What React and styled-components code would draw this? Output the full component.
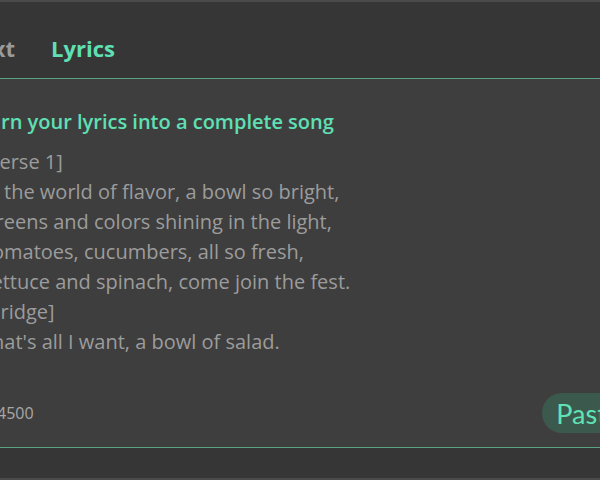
import styled, { createGlobalStyle } from "styled-components";

const GlobalStyle = createGlobalStyle`
    html, body {
        margin: 0;
        padding: 0;
        background-color: #363636;
        overflow: hidden;
    }
`;

const lyrics = [
    "[Verse 1]",
    "In the world of flavor, a bowl so bright,",
    "Greens and colors shining in the light,",
    "Tomatoes, cucumbers, all so fresh,",
    "Lettuce and spinach, come join the fest.",
    "[Bridge]",
    "That's all I want, a bowl of salad.",
];

function App() {
    return (
        <>
            <GlobalStyle />
            <S.Frame>
                <S.TabBar>
                    <S.Tab>Text</S.Tab>
                    <S.Tab $active>Lyrics</S.Tab>
                </S.TabBar>
                <S.Panel>
                    <S.Heading>Turn your lyrics into a complete song</S.Heading>
                    <S.Lyrics>
                        {lyrics.map((line) => (
                            <S.Line key={line}>{line}</S.Line>
                        ))}
                    </S.Lyrics>
                    <S.Footer>
                        <S.Count>0/4500</S.Count>
                        <S.PasteButton>Paste</S.PasteButton>
                    </S.Footer>
                </S.Panel>
                <S.BottomBar />
            </S.Frame>
        </>
    );
}
export default App;

const Frame = styled.div`
    width: 600px;
    height: 480px;
    box-sizing: border-box;
    border-top: 2px solid #4a4a4a;
    border-bottom: 2px solid #4a4a4a;
    display: flex;
    flex-direction: column;
    overflow: hidden;
    font-family: "Open Sans", "Noto Sans", sans-serif;
`;

const TabBar = styled.div`
    height: 77px;
    flex-shrink: 0;
    box-sizing: border-box;
    display: flex;
    align-items: center;
    gap: 36px;
    margin-left: -33px;
    padding-top: 15px;
    background-color: #363636;
    border-bottom: 1px solid #5aa383;
`;

const Tab = styled.div`
    font-size: 22px;
    font-weight: 700;
    line-height: 30px;
    color: ${({ $active }) => ($active ? "#5fe0b4" : "#9a9a9a")};
    cursor: pointer;
`;

const Panel = styled.div`
    flex: 1;
    display: flex;
    flex-direction: column;
    background-color: #3e3e3e;
    border-bottom: 1px solid #5aa383;
    margin-left: -19px;
    padding-top: 30px;
`;

const Heading = styled.div`
    margin-left: -4px;
    font-size: 20px;
    font-weight: 600;
    line-height: 26px;
    color: #5fe0b4;
    white-space: nowrap;
`;

const Lyrics = styled.div`
    margin-top: 12px;
    font-size: 20px;
    line-height: 30px;
    color: #9c9c9c;
`;

const Line = styled.div`
    white-space: nowrap;
`;

const Footer = styled.div`
    margin-top: 36px;
    margin-right: -35px;
    display: flex;
    align-items: center;
    justify-content: space-between;
`;

const Count = styled.div`
    margin-left: 1px;
    font-size: 16px;
    color: #a8a8a8;
`;

const PasteButton = styled.button`
    height: 40px;
    padding: 0 14px;
    border: none;
    border-radius: 20px;
    background-color: #3c594d;
    color: #5fe3b6;
    font-family: "Lato", sans-serif;
    font-size: 27px;
    cursor: pointer;
`;

const BottomBar = styled.div`
    height: 30px;
    flex-shrink: 0;
    background-color: #363636;
`;

const S = {
    Frame,
    TabBar,
    Tab,
    Panel,
    Heading,
    Lyrics,
    Line,
    Footer,
    Count,
    PasteButton,
    BottomBar,
};
